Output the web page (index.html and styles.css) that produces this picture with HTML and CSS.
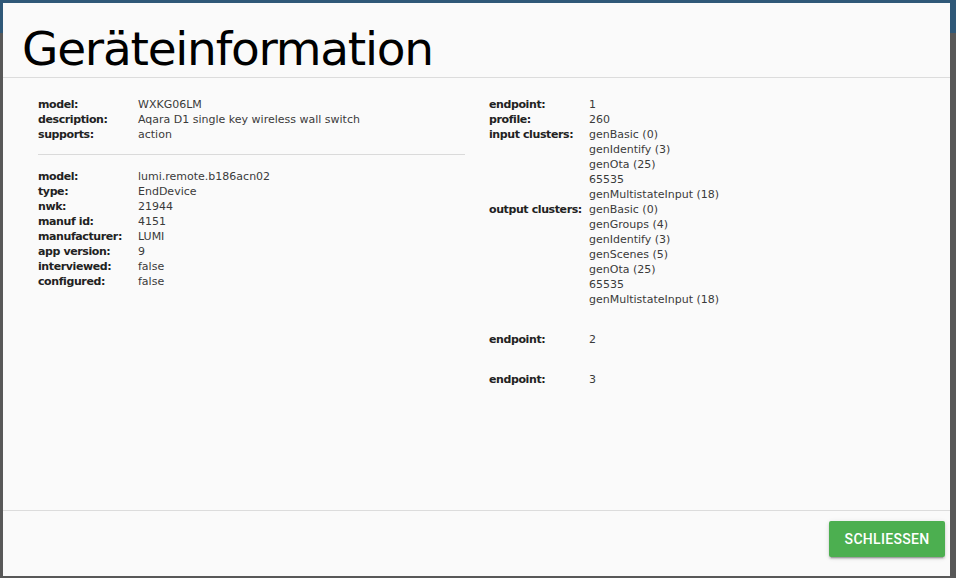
FILE: index.html
```html
<!DOCTYPE html>
<html lang="de">
<head>
<meta charset="utf-8">
<title>Geräteinformation</title>
<link rel="stylesheet" href="styles.css">
</head>
<body>
<div class="backdrop">
  <div class="topbar"></div>
  <div class="modal">
    <div class="modal-header">
      <h1 class="title">Geräteinformation</h1>
    </div>
    <div class="modal-content">
      <div class="col">
        <dl class="info">
          <dt>model:</dt><dd>WXKG06LM</dd>
          <dt>description:</dt><dd>Aqara D1 single key wireless wall switch</dd>
          <dt>supports:</dt><dd>action</dd>
        </dl>
        <hr class="sep">
        <dl class="info">
          <dt>model:</dt><dd>lumi.remote.b186acn02</dd>
          <dt>type:</dt><dd>EndDevice</dd>
          <dt>nwk:</dt><dd>21944</dd>
          <dt>manuf id:</dt><dd>4151</dd>
          <dt>manufacturer:</dt><dd>LUMI</dd>
          <dt>app version:</dt><dd>9</dd>
          <dt>interviewed:</dt><dd>false</dd>
          <dt>configured:</dt><dd>false</dd>
        </dl>
      </div>
      <div class="col">
        <dl class="info endpoint">
          <dt>endpoint:</dt><dd>1</dd>
          <dt>profile:</dt><dd>260</dd>
          <dt>input clusters:</dt>
          <dd>
            <div>genBasic (0)</div>
            <div>genIdentify (3)</div>
            <div>genOta (25)</div>
            <div>65535</div>
            <div>genMultistateInput (18)</div>
          </dd>
          <dt>output clusters:</dt>
          <dd>
            <div>genBasic (0)</div>
            <div>genGroups (4)</div>
            <div>genIdentify (3)</div>
            <div>genScenes (5)</div>
            <div>genOta (25)</div>
            <div>65535</div>
            <div>genMultistateInput (18)</div>
          </dd>
        </dl>
        <dl class="info endpoint">
          <dt>endpoint:</dt><dd>2</dd>
        </dl>
        <dl class="info endpoint">
          <dt>endpoint:</dt><dd>3</dd>
        </dl>
      </div>
    </div>
    <div class="modal-footer">
      <button class="btn" type="button">Schliessen</button>
    </div>
  </div>
</div>
</body>
</html>
```
FILE: styles.css
```css
html, body {
  margin: 0;
  padding: 0;
  height: 100%;
}
body {
  background: #585858;
  font-family: "DejaVu Sans", "Liberation Sans", sans-serif;
  overflow: hidden;
}
.backdrop {
  position: relative;
  width: 956px;
  height: 578px;
  padding: 3px 6px 2px 3px;
  box-sizing: border-box;
}
.topbar {
  position: absolute;
  left: 0;
  top: 0;
  width: 100%;
  height: 33px;
  background: #2f5878;
}
.modal {
  position: relative;
  width: 947px;
  height: 573px;
  background: #fafafa;
  display: flex;
  flex-direction: column;
}
.modal-header {
  height: 75px;
  border-bottom: 1px solid #dcdcdc;
  box-sizing: border-box;
  padding-left: 19px;
}
.title {
  margin: 0;
  font-weight: normal;
  font-size: 47px;
  line-height: 1;
  padding-top: 22px;
  color: #000;
  letter-spacing: -1.25px;
}
.modal-content {
  flex: 1;
  display: grid;
  grid-template-columns: 427px 427px;
  column-gap: 24px;
  padding: 19px 0 0 35px;
  align-content: start;
}
.info {
  margin: 0;
  display: grid;
  grid-template-columns: 100px 1fr;
  font-size: 11px;
  line-height: 15px;
}
.info dt {
  font-weight: bold;
  color: #222;
  letter-spacing: -0.4px;
}
.info dd {
  margin: 0;
  color: #3a3a3a;
}
.sep {
  border: 0;
  border-top: 1px solid #dadada;
  margin: 12px 0 14px 0;
}
.endpoint {
  margin-bottom: 25px;
}
.modal-footer {
  height: 66px;
  border-top: 1px solid #dcdcdc;
  box-sizing: border-box;
  display: flex;
  justify-content: flex-end;
  align-items: flex-start;
  padding: 10px 5px 0 0;
}
.btn {
  width: 116px;
  height: 36px;
  border: 0;
  border-radius: 2px;
  background: #4caf50;
  color: #fff;
  font-family: Roboto, "Liberation Sans", sans-serif;
  font-size: 14px;
  font-weight: 500;
  text-transform: uppercase;
  letter-spacing: 0.3px;
  box-shadow: 0 2px 2px 0 rgba(0,0,0,0.14), 0 1px 5px 0 rgba(0,0,0,0.12), 0 3px 1px -2px rgba(0,0,0,0.2);
  cursor: pointer;
}
```
